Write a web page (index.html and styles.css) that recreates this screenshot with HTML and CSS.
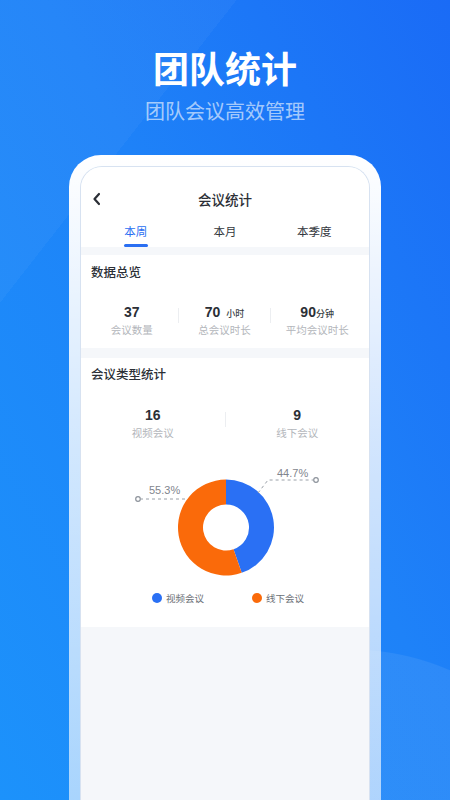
FILE: index.html
```html
<!DOCTYPE html>
<html lang="zh-CN">
<head>
<meta charset="utf-8">
<title>团队统计</title>
<link rel="stylesheet" href="styles.css">
</head>
<body>
<header class="hero">
  <h1 class="hero-title">团队统计</h1>
  <p class="hero-sub">团队会议高效管理</p>
</header>
<div class="phone">
  <div class="screen">
    <div class="top">
      <div class="nav">
        <div class="back">
          <svg width="10" height="14" viewBox="0 0 10 14"><polyline points="7,2 2.5,7 7,12" fill="none" stroke="#2b2f36" stroke-width="2.2" stroke-linecap="round" stroke-linejoin="round"/></svg>
        </div>
        <div class="nav-title">会议统计</div>
        <div></div>
      </div>
      <div class="tabs">
        <div class="tab active"><span>本周</span><i class="bar"></i></div>
        <div class="tab"><span>本月</span></div>
        <div class="tab"><span>本季度</span></div>
      </div>
    </div>

    <section class="card card-overview">
      <h2 class="card-title">数据总览</h2>
      <div class="stats three">
        <div class="stat">
          <div class="num">37</div>
          <div class="label">会议数量</div>
        </div>
        <i class="divider"></i>
        <div class="stat">
          <div class="num">70<small class="unit spaced">小时</small></div>
          <div class="label">总会议时长</div>
        </div>
        <i class="divider"></i>
        <div class="stat">
          <div class="num">90<small class="unit">分钟</small></div>
          <div class="label">平均会议时长</div>
        </div>
      </div>
    </section>

    <section class="card card-type">
      <h2 class="card-title">会议类型统计</h2>
      <div class="stats two">
        <div class="stat">
          <div class="num">16</div>
          <div class="label">视频会议</div>
        </div>
        <i class="divider"></i>
        <div class="stat">
          <div class="num">9</div>
          <div class="label">线下会议</div>
        </div>
      </div>
      <svg class="chart" width="288" height="128" viewBox="0 0 288 128">
        <path d="M145 18.5 A48 48 0 0 1 160.69 111.86 L152.52 88.24 A23 23 0 0 0 145 43.5 Z" fill="#2a70f4"/>
        <path d="M160.69 111.86 A48 48 0 1 1 145 18.5 L145 43.5 A23 23 0 1 0 152.52 88.24 Z" fill="#fa6a0a"/>
        <polyline points="177,32 187,19 232,19" fill="none" stroke="#9aa0a8" stroke-width="1" stroke-dasharray="3 3"/>
        <circle cx="235" cy="19" r="2.3" fill="#fff" stroke="#8d939b" stroke-width="1.2"/>
        <text x="196" y="15.5" class="pct">44.7%</text>
        <polyline points="104,38 60,38" fill="none" stroke="#9aa0a8" stroke-width="1" stroke-dasharray="3 3"/>
        <circle cx="57" cy="38" r="2.3" fill="#fff" stroke="#8d939b" stroke-width="1.2"/>
        <text x="68" y="33" class="pct">55.3%</text>
      </svg>
      <div class="legend">
        <div class="legend-item"><i class="dot blue"></i>视频会议</div>
        <div class="legend-item"><i class="dot orange"></i>线下会议</div>
      </div>
    </section>
  </div>
</div>
</body>
</html>
```

FILE: styles.css
```css
* { box-sizing: border-box; }
html, body { margin: 0; padding: 0; }
body {
  width: 450px;
  height: 800px;
  overflow: hidden;
  font-family: "Liberation Sans", "Noto Sans CJK SC", sans-serif;
  background:
    radial-gradient(circle at 350px 900px, rgba(255,255,255,0.07) 250px, rgba(255,255,255,0) 251px),
    linear-gradient(128deg, rgba(255,255,255,0.035) 22%, rgba(255,255,255,0) 22%),
    linear-gradient(to bottom left, #1a6bf6 0%, #1e82f8 45%, #1c92fb 100%);
}
.hero {
  padding-top: 45px;
  text-align: center;
}
.hero-title {
  margin: 0;
  font-size: 36px;
  line-height: 44px;
  font-weight: 700;
  color: #fff;
  font-family: "Noto Sans CJK SC", sans-serif;
}
.hero-sub {
  margin: 8px 0 0;
  font-size: 20px;
  line-height: 28px;
  color: rgba(255,255,255,0.62);
  font-family: "Noto Sans CJK SC", sans-serif;
}
.phone {
  width: 312px;
  height: 645px;
  margin: 30px auto 0;
  padding: 11px 11px 0;
  border-radius: 32px 32px 0 0;
  background: linear-gradient(to bottom, #ffffff 0%, rgba(255,255,255,0.8) 45%, rgba(255,255,255,0.62) 100%);
}
.screen {
  height: 100%;
  background: #f5f7fa;
  border: 1px solid #d7e2f1;
  border-bottom: none;
  border-radius: 22px 22px 0 0;
  overflow: hidden;
}
.top {
  background: #fff;
  padding-top: 22px;
}
.nav {
  display: grid;
  grid-template-columns: 1fr auto 1fr;
  align-items: center;
  height: 20px;
}
.back {
  padding-left: 11px;
  display: flex;
  align-items: center;
}
.back svg { display: block; }
.nav-title {
  font-family: "Noto Sans CJK SC", sans-serif;
  font-size: 13.5px;
  line-height: 20px;
  color: #2b2f36;
  font-weight: 500;
}
.tabs {
  display: grid;
  grid-template-columns: repeat(3, 1fr);
  padding: 0 10px;
  margin-top: 12px;
  height: 26px;
}
.tab {
  display: flex;
  flex-direction: column;
  align-items: center;
  font-family: "Noto Sans CJK SC", sans-serif;
  font-size: 11.5px;
  line-height: 20px;
  color: #33373d;
}
.tab.active { color: #2a6ff2; }
.tab .bar {
  display: block;
  width: 24px;
  height: 3px;
  margin-top: 3px;
  border-radius: 2px;
  background: #2a6ff2;
}
.card {
  background: #fff;
}
.card-overview {
  margin-top: 8px;
  padding: 8px 0 10px;
}
.card-type {
  margin-top: 10px;
  padding: 7px 0 22px;
}
.card-title {
  margin: 0;
  padding-left: 10px;
  font-family: "Noto Sans CJK SC", sans-serif;
  font-size: 12.5px;
  line-height: 18px;
  font-weight: 500;
  color: #2b2f36;
}
.stats {
  display: grid;
  margin-top: 21px;
}
.stats.three {
  grid-template-columns: 1fr 1px 1fr 1px 1fr;
  padding: 0 6px 0 5px;
}
.stats.two {
  grid-template-columns: 1fr 1px 1fr;
  margin-top: 22px;
}
.divider {
  display: block;
  width: 1px;
  height: 15px;
  margin-top: 6px;
  background: #eceef1;
}
.stats.two .divider { margin-top: 7px; }
.stat {
  text-align: center;
}
.num {
  font-size: 14px;
  line-height: 20px;
  height: 20px;
  font-weight: 700;
  color: #2b2f36;
  display: flex;
  justify-content: center;
  align-items: baseline;
}
.unit {
  font-family: "Noto Sans CJK SC", sans-serif;
  font-size: 9px;
  line-height: 12px;
  font-weight: 500;
  color: #3b3f46;
}
.unit.spaced { margin-left: 6px; }
.label {
  margin-top: 0;
  font-family: "Noto Sans CJK SC", sans-serif;
  font-size: 10.5px;
  line-height: 16px;
  color: #b3b6bb;
}
.chart {
  display: block;
  margin-top: 20px;
}
.pct {
  font-family: "Liberation Sans", sans-serif;
  font-size: 11px;
  fill: #7f858d;
}
.legend {
  display: flex;
  justify-content: center;
  gap: 48px;
  padding-left: 6px;
  margin-top: 2px;
}
.legend-item {
  display: flex;
  align-items: center;
  gap: 4px;
  font-family: "Noto Sans CJK SC", sans-serif;
  font-size: 9.5px;
  line-height: 14px;
  color: #6b6f76;
}
.dot {
  display: block;
  width: 10px;
  height: 10px;
  border-radius: 50%;
}
.dot.blue { background: #2a70f4; }
.dot.orange { background: #fa6a0a; }
```
